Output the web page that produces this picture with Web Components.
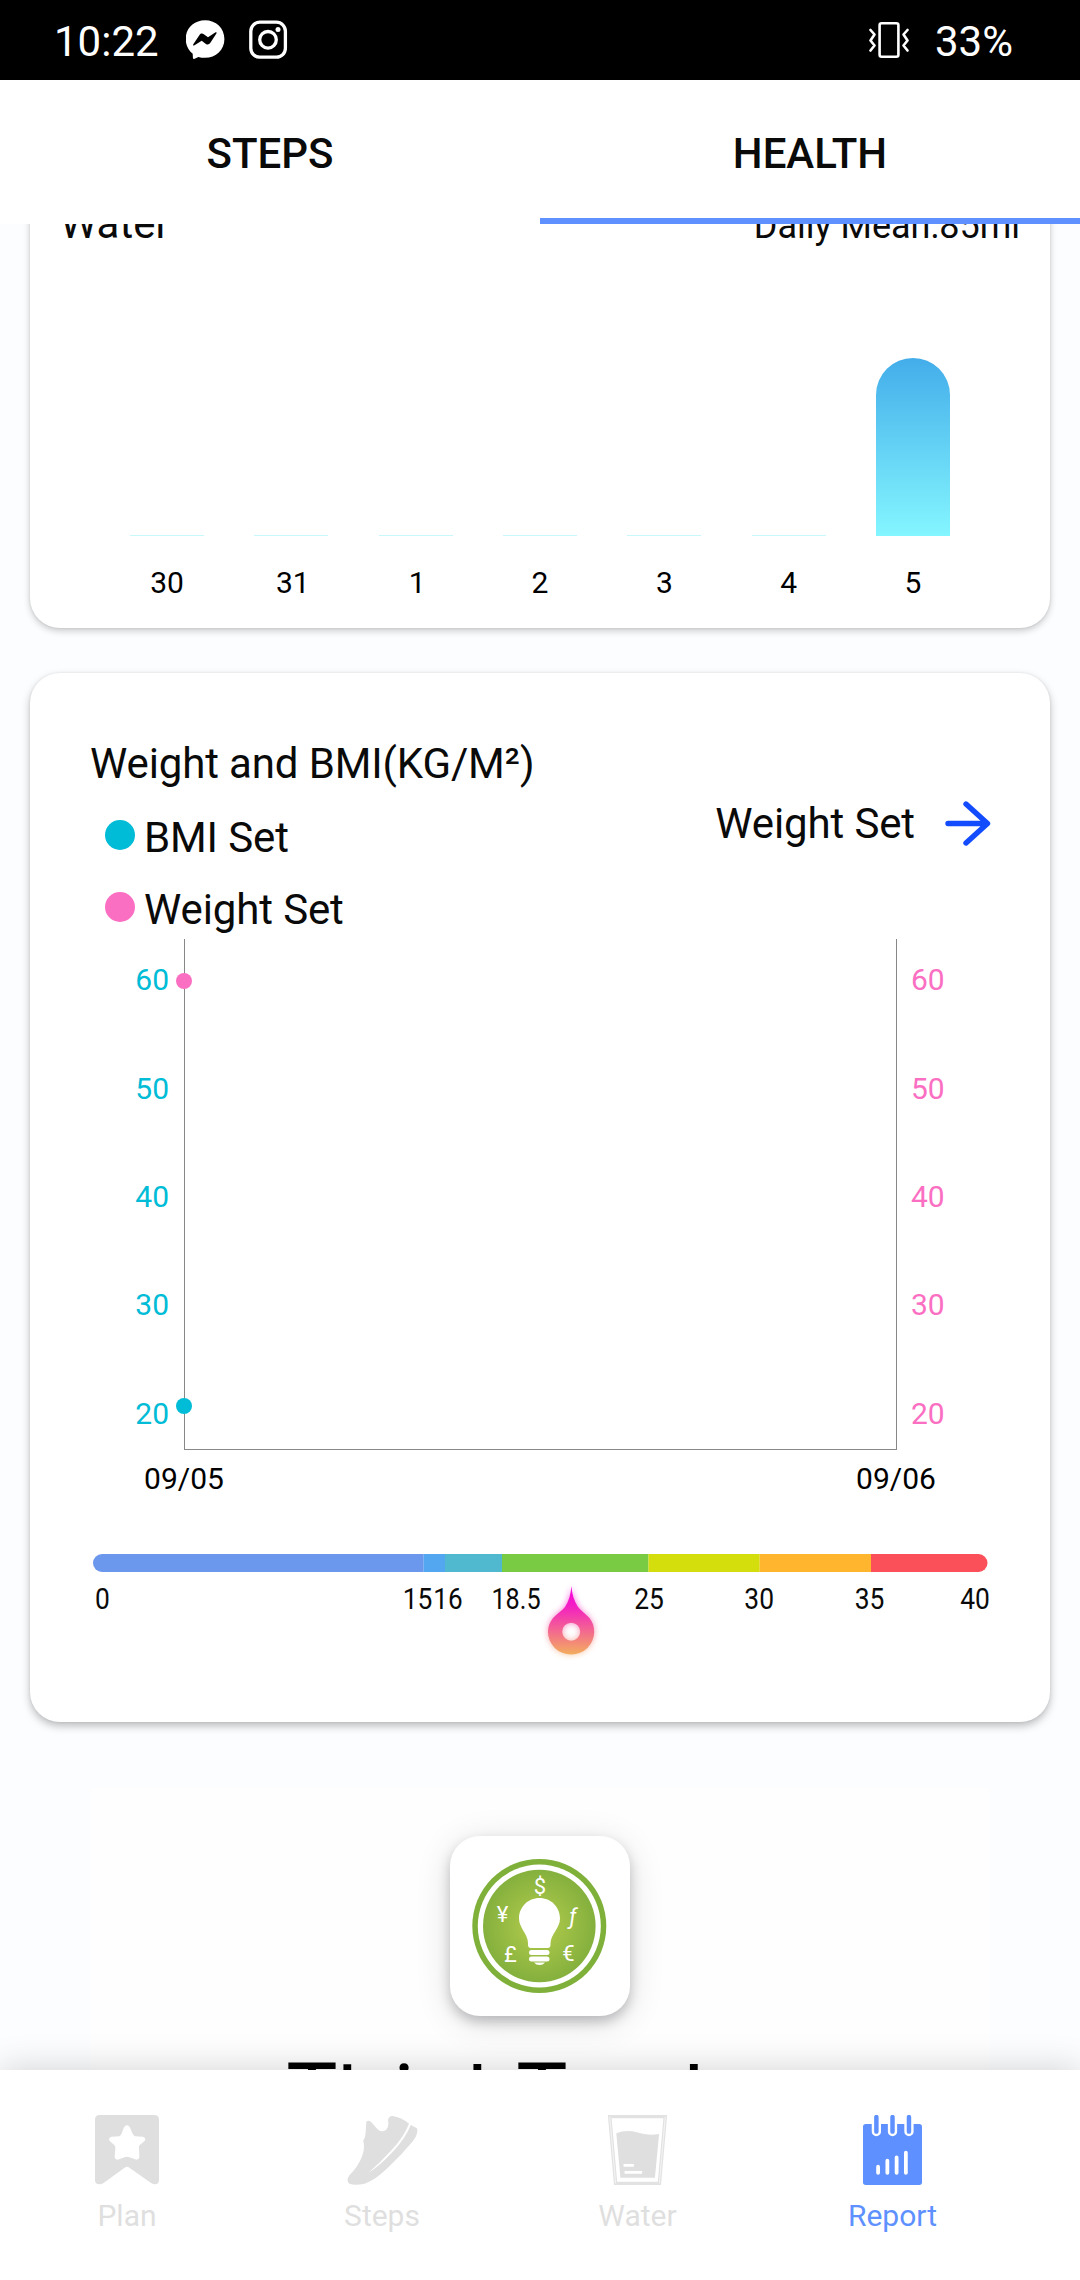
<!DOCTYPE html>
<html lang="en">
<head>
<meta charset="utf-8">
<title>Health report</title>
<style>
body{margin:0;width:1080px;height:2280px;overflow:hidden;background:#fbfdff;font-family:Roboto,"Noto Sans",sans-serif;color:#0a0a0a}
</style>
</head>
<body>
<health-app></health-app>
<script>
const define = (name, html, after) => {
  const tpl = document.createElement('template');
  tpl.innerHTML = html;
  customElements.define(name, class extends HTMLElement {
    constructor() {
      super();
      this.attachShadow({mode: 'open'}).append(tpl.content.cloneNode(true));
    }
    connectedCallback() { if (after) after(this, this.shadowRoot); }
  });
};

define('status-bar', `
<style>
:host{display:flex;justify-content:space-between;align-items:center;height:80px;box-sizing:border-box;padding:3px 66px 0 54px;background:#000;color:#fff;font-size:42px;line-height:48px}
div{display:flex;align-items:center}
svg{display:block;margin-bottom:3px}
</style>
<div>
  <span>10:22</span>
  <svg style="margin-left:27px" width="39" height="40" viewBox="186 21 39 40"><path fill="#fff" d="M205 21.2c11 0 19.4 8 19.4 18.8S216 58.800 205 58.800c-2.500 0-4.600-.3-6.600-.9l-3.800 1.900c-1.200.5-1.700 0-1.700-1.200l-.2-3.800c-4.400-3.600-7-8.800-7-14.800C185.700 29.200 194 21.200 205 21.200z"/><path fill="#000" d="M193.300 45.200l6.200-9.300c1.100-1.500 3-1.700 4.300-.7l4.200 3.100 7.200-4.700c1.200-.7 1.700 0 1.200 1l-6.200 9.500c-1.100 1.600-3 1.700-4.300.8l-4.200-3.100-7.200 4.500c-1.200.6-1.700 0-1.200-1.100z"/></svg>
  <svg style="margin-left:24px" width="39" height="40" viewBox="249 20.500 39 40"><g fill="none" stroke="#fff" stroke-width="3.300"><rect x="250.800" y="22.700" width="34.600" height="35" rx="9"/><circle cx="268" cy="40.300" r="8.300"/></g><circle cx="278" cy="30" r="2.500" fill="#fff"/></svg>
</div>
<div>
  <svg style="margin-right:24px" width="42" height="38" viewBox="869 21 42 38" fill="none" stroke="#fff" stroke-width="2.600" stroke-linejoin="round" stroke-linecap="round"><rect x="879.600" y="23.300" width="18.800" height="33.400" rx="2"/><path d="M870.500 30l4 4.500-4 6 4 5-4 5M907.500 30l-4 4.500 4 6-4 5 4 5"/></svg>
  <span style="margin-right:1px">33%</span>
</div>`);

define('tab-item', `
<style>
:host{flex:1;display:flex;justify-content:center;align-items:center;box-sizing:border-box;height:144px;padding-top:9px;border-bottom:6px solid transparent;font-size:42px;font-weight:500}
:host([selected]){border-color:#5e91ff}
</style><slot></slot>`);

define('tab-strip', `<style>:host{display:flex;background:#fff}</style><slot></slot>`);

define('app-card', `
<style>
:host{display:block;box-sizing:border-box;margin:0 30px;background:#fff;border-radius:30px;box-shadow:0 3px 7px rgba(0,0,0,.2),0 0 3px rgba(0,0,0,.1)}
</style><slot></slot>`);

define('bar-chart', `
<style>
:host{display:block}
header{display:flex;justify-content:space-between;padding:16px 30px 0;font-size:42px;line-height:48px;height:48px}
.mean{font-size:36px;padding-top:2px}
.bars{display:flex;justify-content:space-between;align-items:flex-end;height:288px;margin:0 100px}
.bar{width:74px;height:var(--h);box-sizing:border-box;background:linear-gradient(#43adea,#84f6ff);border-radius:37px 37px 0 0}
.bar.zero{height:1px;border-radius:0;background:#c8f7fc}
.labels{display:flex;justify-content:space-between;margin:29px 75px 0 75px;font-size:30px;line-height:36px;color:#000}
.labels span{width:124px;text-align:center}
.labels span:nth-child(2),.labels span:nth-child(3){text-indent:3px}
</style>
<header><span>Water</span><span class="mean">Daily Mean:85ml</span></header>
<div class="bars"></div><div class="labels"></div>`, (el, root) => {
  const bars = root.querySelector('.bars'), labels = root.querySelector('.labels');
  el.getAttribute('data').split(',').forEach(item => {
    const [day, h] = item.split(':');
    const bar = document.createElement('div');
    bar.className = +h ? 'bar' : 'bar zero';
    bar.style.setProperty('--h', h + 'px');
    bars.append(bar);
    const s = document.createElement('span');
    s.textContent = day;
    labels.append(s);
  });
});

define('legend-item', `
<style>
:host{display:flex;align-items:center;height:72px;font-size:42px;line-height:48px;letter-spacing:-.12px}
i{width:30px;height:30px;border-radius:50%;background:var(--dot);margin:0 9px 5px 0}
span{padding-top:2px}
</style><i></i><span><slot></slot></span>`);

define('set-link', `
<style>
:host{display:flex;align-items:center;height:45px;font-size:42px;line-height:48px;letter-spacing:-.12px}
svg{display:block;margin-left:30px}
</style><span><slot></slot></span>
<svg width="46" height="45" viewBox="0 0 46 45" fill="none" stroke="#134bff" stroke-width="5.400" stroke-linecap="round" stroke-linejoin="round"><path d="M3 22.500H42M21 3L42.500 22.500L21 42"/></svg>`);

define('line-chart', `
<style>:host{display:block}svg{display:block}text{font-size:30px}</style>
<svg width="1020" height="580" viewBox="30 930 1020 580">
  <g stroke="#888" fill="none" shape-rendering="crispEdges"><path d="M184.500 939V1449.500H896.500V939"/></g>
  <g class="l" fill="#00bcd6" text-anchor="end"></g><g class="r" fill="#fb6fc3"></g>
  <circle cx="184" cy="981" r="8" fill="#fb6fc3"/><circle cx="184" cy="1406" r="8" fill="#00bcd6"/>
  <g fill="#000" text-anchor="middle"><text x="184" y="1489">09/05</text><text x="896" y="1489">09/06</text></g>
</svg>`, (el, root) => {
  const rows = [[60, 990], [50, 1099], [40, 1207], [30, 1315], [20, 1424]];
  root.querySelector('.l').innerHTML = rows.map(([v, y]) => `<text x="169" y="${y}">${v}</text>`).join('');
  root.querySelector('.r').innerHTML = rows.map(([v, y]) => `<text x="911" y="${y}">${v}</text>`).join('');
});

define('bmi-gauge', `
<style>:host{display:block}svg{display:block}text{font-size:30px}</style>
<svg width="1020" height="140" viewBox="30 1540 1020 140">
  <defs>
    <clipPath id="c"><rect x="93" y="1554" width="894.500" height="18" rx="9"/></clipPath>
    <linearGradient id="g" x1="0" y1="0" x2="0" y2="1"><stop offset="0" stop-color="#f500e0"/><stop offset=".3" stop-color="#f320c2"/><stop offset="1" stop-color="#f3ae5e"/></linearGradient>
    <filter id="b" x="-50%" y="-50%" width="200%" height="200%"><feGaussianBlur stdDeviation="3"/></filter>
    <path id="m" fill-rule="evenodd" d="M571.400 1586C572 1594 574 1601 578 1607C581 1611 586 1614 589.500 1618C593 1622.500 594.200 1627 594.200 1632A23.100 22.500 0 0 1 548 1632C548 1627 549.500 1622.500 553 1618C557 1613.500 562 1611 565 1607C569 1601 570.800 1594 571.400 1586ZM571.200 1622.700A9 9 0 1 0 571.200 1640.700A9 9 0 1 0 571.200 1622.700Z"/>
  </defs>
  <g clip-path="url(#c)" class="s"></g><g class="t" fill="#0a0a0a"></g>
  <use href="#m" fill="url(#g)" filter="url(#b)" opacity=".65"/>
  <use href="#m" fill="url(#g)"/>
</svg>`, (el, root) => {
  const seg = [[93, '#6b97ec'], [423.700, '#53a7f0'], [445, '#50b9d0'], [502, '#7acb44'], [648.500, '#d3de0c'], [759.700, '#ffb62e'], [871, '#fb4f5a'], [988]];
  root.querySelector('.s').innerHTML = seg.slice(0, -1).map(([x, c], i) => `<rect x="${x}" y="1554" width="${seg[i + 1][0] - x}" height="18" fill="${c}"/>`).join('');
  const ticks = [['0', 102.5, .88], ['15', 417.5, .88], ['16', 448, .87], ['18.5', 516, .84], ['25', 649, .88], ['30', 759.200, .88], ['35', 869.500, .88], ['40', 975, .88]];
  root.querySelector('.t').innerHTML = ticks.map(([t, x, k]) => `<text text-anchor="middle" transform="translate(${x} 1609) scale(${k} 1)">${t}</text>`).join('');
});

define('weight-card', `
<style>
:host{display:block;height:1049px}
h2{margin:0;padding:67px 60px 0;font-size:42px;line-height:48px;font-weight:400;letter-spacing:-.13px}
.row{display:flex;justify-content:space-between;align-items:flex-start;padding:13px 59px 0 75px;height:144px}
line-chart{margin-top:-15px}
bmi-gauge{margin-top:30px}
</style>
<h2>Weight and BMI(KG/M²)</h2>
<div class="row"><div><legend-item style="--dot:#00bcd6">BMI Set</legend-item><legend-item style="--dot:#fb6fc3">Weight Set</legend-item></div><set-link>Weight Set</set-link></div>
<line-chart></line-chart><bmi-gauge></bmi-gauge>`);

define('sponsor-tile', `
<style>
:host{display:flex;flex-direction:column;align-items:center;margin:66px 90px 0;height:400px;background:#fefefe;padding-top:48px;box-sizing:border-box}
.tile{width:180px;height:180px;border-radius:30px;background:#fff;box-shadow:0 6px 12px rgba(40,40,50,.25),0 6px 36px rgba(0,0,0,.12)}
svg{display:block}
.title{font-size:86px}
</style>
<div class="tile"><svg width="180" height="180" viewBox="450 1836 180 180">
  <defs><radialGradient id="k" cx=".5" cy=".5" r=".5"><stop offset="0" stop-color="#b5cd4d"/><stop offset="1" stop-color="#84b03d"/></radialGradient></defs>
  <circle cx="539.300" cy="1926" r="67" fill="#7fb03a"/><circle cx="539.300" cy="1926" r="61.500" fill="#fff"/><circle cx="539.300" cy="1926" r="56.300" fill="url(#k)"/>
  <g fill="#fff"><path d="M539.500 1898C551 1898 560 1907 560 1918.500C560 1928 551 1934 550.500 1943V1945Q550.500 1948 547.500 1948H531Q528 1948 528 1945V1943C528 1934 519 1928 519 1918.500C519 1907 528 1898 539.500 1898Z"/><rect x="529" y="1950" width="20.500" height="5" rx="2.500"/><rect x="529" y="1956.500" width="20.500" height="5" rx="2.500"/><path d="M534 1962.500H545Q543 1965 539.500 1965Q536 1965 534 1962.500Z"/></g>
  <g fill="#fff" font-size="22" text-anchor="middle"><text x="540" y="1893.500">$</text><text x="502.500" y="1921.500">¥</text><text x="573" y="1924" font-style="italic">ƒ</text><text x="510.500" y="1962">£</text><text x="568.500" y="1961">€</text></g>
</svg></div>
<svg width="900" height="90" viewBox="90 2050 900 90" style="margin-top:34px"><text class="title" x="286.300 337.500 393.500 414 467.500 498 516.300 571 618 684" y="2123.300 2127.500 2125 2123 2127.500 2123 2123.300 2123 2123 2127.500">Think Tank</text></svg>`);

define('nav-item', `
<style>
:host{display:flex;flex-direction:column;align-items:center;padding-top:45px;font-size:30px;line-height:36px;color:#dfdfdf}
:host([selected]){color:#5e91ff}
span{margin-top:13px}
::slotted(svg){display:block;height:70px}
</style><slot name="icon"></slot><span><slot></slot></span>`);

define('bottom-nav', `
<style>
:host{display:block;height:210px;background:#fff;position:relative;z-index:2;box-shadow:0 0 34px rgba(0,0,0,.18)}
nav{display:grid;grid-template-columns:254px 256px 255px 255px}
</style>
<nav>
<nav-item><svg slot="icon" width="64" viewBox="276 225 186 210" preserveAspectRatio="none"><path fill="#dfdfdf" fill-rule="evenodd" d="M290 225H448Q462 225 462 239V420Q462 433 450 433Q445 433 440 430L376 383Q369 378 362 383L300 430Q295 433 289 433Q276 433 276 420V239Q276 225 290 225ZM369 256Q362 257 358 268Q352 287 347 289L324 290Q314 293 318 302L332 315Q336 318 335 328L333 352Q335 362 346 358L362 352Q369 349 376 352L392 358Q403 362 405 352L404 328Q402 318 406 315L421 302Q425 293 415 290L392 289Q386 287 380 268Q376 257 369 256Z"/></svg>Plan</nav-item>
<nav-item><svg slot="icon" width="71" viewBox="1007 225 206 210" preserveAspectRatio="none"><path fill="#dfdfdf" d="M1063 246Q1070 238 1078 247Q1090 263 1099 271Q1109 277 1120 270Q1130 262 1126 240Q1128 228 1139 228Q1165 232 1187 251Q1171 292 1136 331Q1103 368 1069 399Q1105 375 1141 334Q1177 294 1192 255L1210 265Q1215 280 1198 304Q1165 345 1130 379Q1085 424 1058 431Q1030 437 1014 431Q1003 422 1014 406Q1040 379 1051 348Q1060 325 1054 302Q1061 292 1061 280Z"/></svg>Steps</nav-item>
<nav-item><svg slot="icon" width="59" viewBox="196 225 171 210" preserveAspectRatio="none"><path d="M201 230H362L345 430H218Z" fill="none" stroke="#e2e2e2" stroke-width="10"/><path d="M201 230L218 430M362 230L345 430" stroke="#f4f4f4" stroke-width="3"/><path fill="#dfdfdf" d="M220 280Q250 267 279 277Q310 288 344 282L332 413H232Z"/><path stroke="#fff" stroke-width="8" d="M241 376H271M244 397H295"/></svg>Water</nav-item>
<nav-item selected><svg slot="icon" width="59" viewBox="936 225 172 210" preserveAspectRatio="none"><rect x="936" y="252" width="172" height="183" rx="8" fill="#5e91ff"/><path stroke="#fff" stroke-width="27" stroke-linecap="round" d="M975 220V275M1022 220V275M1070 220V275"/><path stroke="#5e91ff" stroke-width="13" stroke-linecap="round" d="M975 231V275M1022 231V275M1070 231V275"/><path stroke="#fff" stroke-width="11" stroke-linecap="round" d="M980 380V399M1007 362V399M1034 352V399M1061 338V399"/></svg>Report</nav-item>
</nav>`);

define('health-app', `
<style>
:host{display:flex;flex-direction:column;width:1080px;height:2280px}
main{height:1846px;overflow:hidden}
.scroll{display:flow-root;margin-top:-40px}
.water{height:444px}
.weight{margin-top:45px;box-shadow:0 4px 9px rgba(0,0,0,.26),0 0 3px rgba(0,0,0,.08)}
</style>
<status-bar></status-bar>
<tab-strip><tab-item>STEPS</tab-item><tab-item selected>HEALTH</tab-item></tab-strip>
<main>
  <div class="scroll">
    <app-card class="water"><bar-chart data="30:0,31:0,1:0,2:0,3:0,4:0,5:178"></bar-chart></app-card>
    <app-card class="weight"><weight-card></weight-card></app-card>
    <sponsor-tile></sponsor-tile>
  </div>
</main>
<bottom-nav></bottom-nav>`);
</script>
</body>
</html>
